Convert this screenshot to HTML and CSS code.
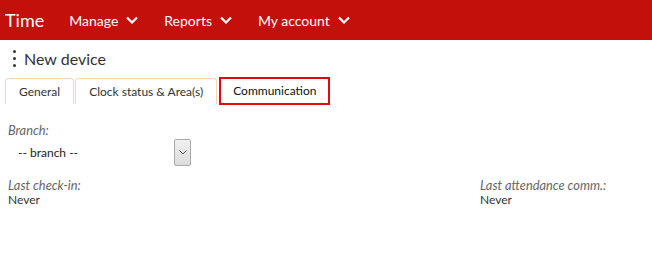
FILE: index.html
```html
<!DOCTYPE html>
<html lang="en">
<head>
    <meta charset="UTF-8">
    <title>New device</title>
    <link rel="stylesheet" href="styles.css">
</head>
<body>
    <div class="topbar">
        <div class="brand">Time</div>
        <div class="menu-item">Manage <svg class="chev" viewBox="0 0 12 8"><path d="M1 1.5l5 5 5-5" /></svg></div>
        <div class="menu-item">Reports <svg class="chev" viewBox="0 0 12 8"><path d="M1 1.5l5 5 5-5" /></svg></div>
        <div class="menu-item">My account <svg class="chev" viewBox="0 0 12 8"><path d="M1 1.5l5 5 5-5" /></svg></div>
    </div>
    <div class="page">
        <div class="title-row">
            <div class="kebab"><span></span><span></span><span></span></div>
            <h1 class="title">New device</h1>
        </div>
        <div class="tabs">
            <div class="tab">General</div>
            <div class="tab">Clock status &amp; Area(s)</div>
            <div class="tab active">Communication</div>
        </div>
        <div class="form">
            <div class="field">
                <div class="label">Branch:</div>
                <div class="select">
                    <span class="select-text">-- branch --</span>
                    <span class="select-btn"><svg viewBox="0 0 8 5"><path d="M0.5 0.5l3.5 3.5 3.5-3.5" /></svg></span>
                </div>
            </div>
            <div class="info-row">
                <div class="field">
                    <div class="label">Last check-in:</div>
                    <div class="value">Never</div>
                </div>
                <div class="field right">
                    <div class="label">Last attendance comm.:</div>
                    <div class="value">Never</div>
                </div>
            </div>
        </div>
    </div>
</body>
</html>
```

FILE: styles.css
```css
body {
    margin: 0;
    font-family: Lato, 'Open Sans', sans-serif;
    background-color: #fff;
    color: #333;
}
.topbar {
    height: 40px;
    background-color: #c4100b;
    color: #fff;
    display: flex;
    align-items: center;
    padding-left: 5px;
}
.brand {
    font-size: 18px;
    margin-right: 25px;
    padding-bottom: 1px;
}
.menu-item {
    font-size: 14px;
    display: flex;
    align-items: center;
    margin-right: 26px;
}
.chev {
    width: 12px;
    height: 8px;
    margin-left: 8px;
    fill: none;
    stroke: #fff;
    stroke-width: 2.2;
}
.page {
    padding: 6px 8px 0 5px;
}
.title-row {
    display: flex;
    align-items: center;
    height: 24px;
}
.kebab {
    width: 19px;
    display: flex;
    flex-direction: column;
    align-items: center;
    gap: 4px;
}
.kebab span {
    width: 3px;
    height: 3px;
    border-radius: 50%;
    background-color: #333;
}
.title {
    font-size: 16px;
    font-weight: normal;
    margin: 0;
    color: #333;
}
.tabs {
    display: flex;
    margin-top: 8px;
    gap: 1px;
}
.tab {
    height: 25px;
    line-height: 26px;
    font-size: 12px;
    padding: 0 13px;
    border: 1px solid #f5d6b0;
    border-bottom: none;
    border-radius: 4px 4px 0 0;
    color: #333;
}
.tab.active {
    border: 2px solid #e8080b;
    border-radius: 0;
    line-height: 24px;
    height: 24px;
    margin-top: -1px;
    margin-left: 1px;
    padding: 0 12px;
    color: #111;
}
.form {
    padding: 18px 0 0 3px;
    font-size: 12px;
}
.label {
    font-style: italic;
    font-size: 12.8px;
    color: #666;
    line-height: 14px;
}
.select {
    display: flex;
    align-items: center;
    width: 183px;
    height: 26px;
    margin-top: 2px;
}
.select-text {
    flex: 1;
    padding-left: 10px;
    font-size: 12px;
    color: #222;
}
.select-btn {
    width: 15px;
    height: 25px;
    border: 1px solid #aaa;
    border-radius: 2px;
    background: linear-gradient(#f0f0f0, #dcdcdc);
    display: flex;
    align-items: center;
    justify-content: center;
}
.select-btn svg {
    width: 8px;
    height: 5px;
    fill: none;
    stroke: #555;
    stroke-width: 1;
}
.info-row {
    display: flex;
    justify-content: space-between;
    margin-top: 13px;
}
.right {
    width: 164px;
}
.value {
    color: #333;
    line-height: 15px;
}
```
